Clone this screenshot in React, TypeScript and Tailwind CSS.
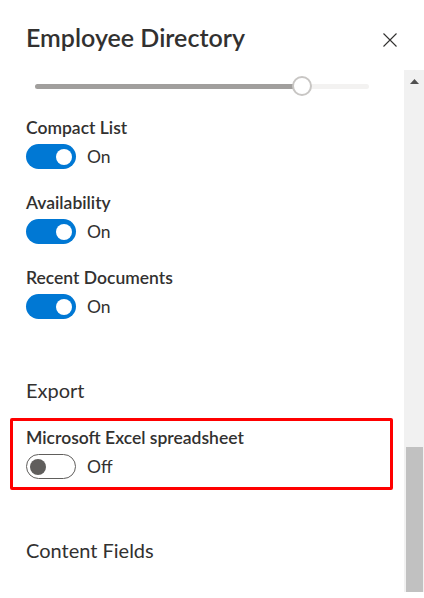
import React from 'react';

const Toggle = ({ on }: { on: boolean }) => (
  <div className="flex items-center mt-[4px]">
    {on ? (
      <div className="w-[50px] h-[25px] rounded-full bg-[#0078d4] flex items-center justify-end pr-[4px]">
        <div className="w-[16px] h-[16px] rounded-full bg-white" />
      </div>
    ) : (
      <div className="w-[50px] h-[25px] rounded-full border border-[#605e5c] flex items-center pl-[3px]">
        <div className="w-[16px] h-[16px] rounded-full bg-[#605e5c]" />
      </div>
    )}
    <span className="ml-[11px] text-[17.5px] leading-[24px]">{on ? 'On' : 'Off'}</span>
  </div>
);

const Setting = ({ label, on, className = '' }: { label: string; on: boolean; className?: string }) => (
  <div className={className}>
    <div className="pt-[1px] text-[17.5px] leading-[24px] font-semibold">{label}</div>
    <Toggle on={on} />
  </div>
);

export default function App() {
  return (
    <div className="w-[424px] h-[598px] bg-white flex flex-col overflow-hidden text-[#323130] font-['Lato','Noto_Sans',sans-serif]">
      <div className="h-[70px] flex items-start justify-between pl-[26px] pr-[27px] pt-[21px]">
        <h1 className="text-[25px] leading-[32px] font-semibold">Employee Directory</h1>
        <button className="mt-[12px] w-[14px] h-[14px] text-[#323130]" aria-label="Close">
          <svg viewBox="0 0 14 14" width="14" height="14">
            <path d="M0.5 0.5 L13.5 13.5 M13.5 0.5 L0.5 13.5" stroke="currentColor" strokeWidth="1.1" fill="none" />
          </svg>
        </button>
      </div>

      <div className="flex h-[522px]">
        <div className="flex-1 overflow-hidden pl-[26px] pr-[27px]">
          {/* slider */}
          <div className="relative mt-[6px] h-[20px] ml-[9px] mr-[8px] flex items-center">
            <div className="w-full h-[5px] rounded-full bg-[#f3f2f1] flex">
              <div className="w-[80%] h-full rounded-l-full bg-[#a19f9d]" />
            </div>
            <div className="absolute left-[80%] top-0 -ml-[10px] w-[20px] h-[20px] rounded-full bg-white border-2 border-[#c8c6c4]" />
          </div>

          <Setting label="Compact List" on className="mt-[19px]" />
          <Setting label="Availability" on className="mt-[21px]" />
          <Setting label="Recent Documents" on className="mt-[21px]" />

          <div className="mt-[57px] text-[20px] leading-[28px]">Export</div>

          <div className="mt-[14px] -mx-[16px] px-[13px] pt-[4px] pb-[8px] border-[3px] border-[#ff0000] rounded-[2px]">
            <div className="pt-[1px] text-[17.5px] leading-[24px] font-semibold">Microsoft Excel spreadsheet</div>
            <div className="mt-[2px]">
              <Toggle on={false} />
            </div>
          </div>

          <div className="mt-[46px] text-[20px] leading-[28px]">Content Fields</div>
        </div>

        <div className="w-[20px] bg-[#f1f1f1] flex flex-col">
          <div className="h-[22px] flex items-center justify-center">
            <svg viewBox="0 0 9 5" width="9" height="5">
              <path d="M4.5 0 L9 5 L0 5 Z" fill="#505050" />
            </svg>
          </div>
          <div className="mt-auto ml-[2px] w-[17px] h-[145px] bg-[#c1c1c1]" />
        </div>
      </div>
    </div>
  );
}
